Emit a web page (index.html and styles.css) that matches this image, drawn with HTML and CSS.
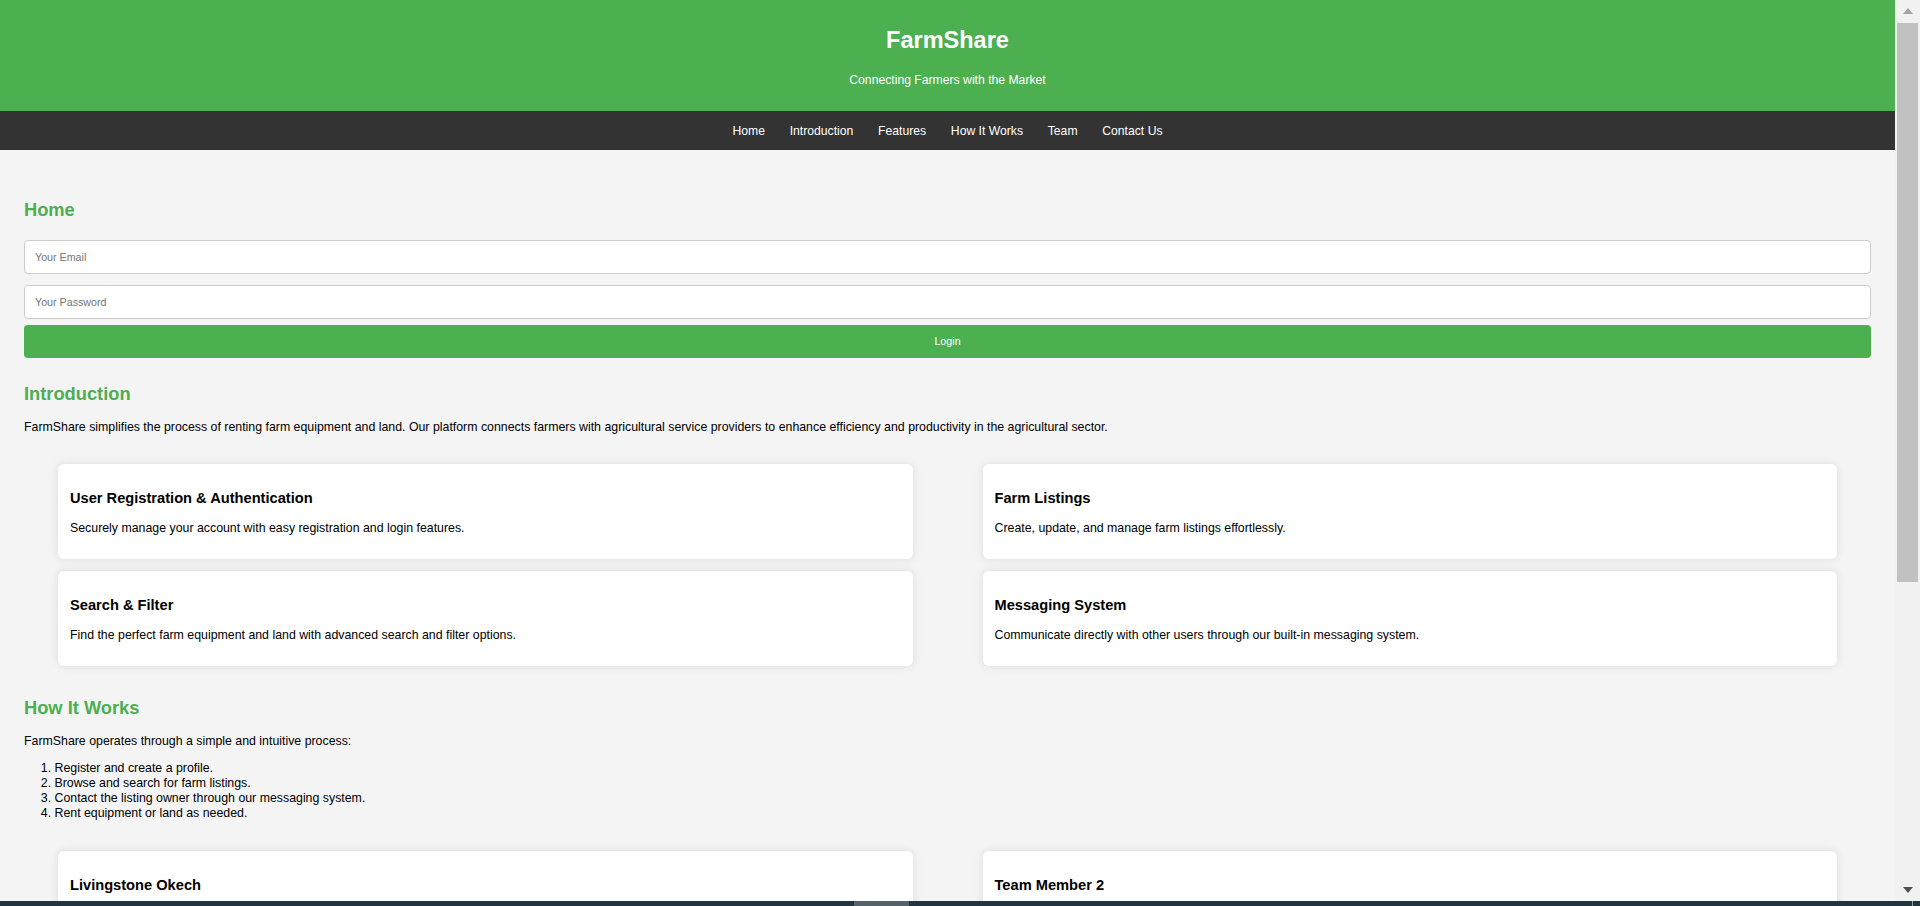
FILE: index.html
```html
<!DOCTYPE html>
<html lang="en">
<head>
<meta charset="utf-8">
<title>FarmShare</title>
<link rel="stylesheet" href="styles.css">
</head>
<body>
<div class="window">
  <div class="page">
    <header class="site-header">
      <h1>FarmShare</h1>
      <p>Connecting Farmers with the Market</p>
    </header>
    <nav class="site-nav">
      <a href="#home">Home</a>
      <a href="#introduction">Introduction</a>
      <a href="#features">Features</a>
      <a href="#how">How It Works</a>
      <a href="#team">Team</a>
      <a href="#contact">Contact Us</a>
    </nav>
    <main class="content">
      <section id="home" class="section">
        <h2 class="section-title">Home</h2>
        <form class="login-form">
          <input class="field" type="email" placeholder="Your Email">
          <input class="field" type="password" placeholder="Your Password">
          <button class="login-btn" type="button">Login</button>
        </form>
      </section>

      <section id="introduction" class="section">
        <h2 class="section-title">Introduction</h2>
        <p class="text">FarmShare simplifies the process of renting farm equipment and land. Our platform connects farmers with agricultural service providers to enhance efficiency and productivity in the agricultural sector.</p>
        <div id="features" class="card-grid">
          <div class="card">
            <h3 class="card-title">User Registration &amp; Authentication</h3>
            <p class="card-text">Securely manage your account with easy registration and login features.</p>
          </div>
          <div class="card">
            <h3 class="card-title">Farm Listings</h3>
            <p class="card-text">Create, update, and manage farm listings effortlessly.</p>
          </div>
          <div class="card">
            <h3 class="card-title">Search &amp; Filter</h3>
            <p class="card-text">Find the perfect farm equipment and land with advanced search and filter options.</p>
          </div>
          <div class="card">
            <h3 class="card-title">Messaging System</h3>
            <p class="card-text">Communicate directly with other users through our built-in messaging system.</p>
          </div>
        </div>
      </section>

      <section id="how" class="section">
        <h2 class="section-title">How It Works</h2>
        <p class="text">FarmShare operates through a simple and intuitive process:</p>
        <ol class="steps">
          <li>Register and create a profile.</li>
          <li>Browse and search for farm listings.</li>
          <li>Contact the listing owner through our messaging system.</li>
          <li>Rent equipment or land as needed.</li>
        </ol>
      </section>

      <section id="team" class="section">
        <div class="card-grid">
          <div class="card">
            <h3 class="card-title">Livingstone Okech</h3>
            <p class="card-text">Project Lead &amp; Developer</p>
          </div>
          <div class="card">
            <h3 class="card-title">Team Member 2</h3>
            <p class="card-text">Role Description</p>
          </div>
          <div class="card">
            <h3 class="card-title">Team Member 3</h3>
            <p class="card-text">Role Description</p>
          </div>
          <div class="card">
            <h3 class="card-title">Team Member 4</h3>
            <p class="card-text">Role Description</p>
          </div>
        </div>
      </section>

      <section id="contact" class="section">
        <h2 class="section-title">Contact Us</h2>
        <form class="login-form">
          <input class="field" type="text" placeholder="Your Name">
          <input class="field" type="email" placeholder="Your Email">
          <textarea class="field area" placeholder="Your Message"></textarea>
          <button class="login-btn" type="button">Send Message</button>
        </form>
      </section>
    </main>
    <footer class="site-footer">
      <p>&copy; 2024 FarmShare. All rights reserved.</p>
    </footer>
  </div>
  <div class="scrollbar">
    <div class="sb-btn">
      <svg width="10" height="6" viewBox="0 0 10 6"><polygon points="5,0 10,6 0,6" fill="#a3a3a3"/></svg>
    </div>
    <div class="sb-thumb"></div>
    <div class="sb-space"></div>
    <div class="sb-btn">
      <svg width="10" height="6" viewBox="0 0 10 6"><polygon points="0,0 10,0 5,6" fill="#505050"/></svg>
    </div>
  </div>
</div>
<div class="taskbar">
  <span class="taskbar-item"></span>
  <span class="taskbar-tick"></span>
</div>
</body>
</html>
```

FILE: styles.css
```css
* {
  box-sizing: border-box;
}

html, body {
  margin: 0;
  padding: 0;
  height: 100%;
  overflow: hidden;
}

body {
  font-family: "Liberation Sans", Arial, sans-serif;
  font-size: 12.35px;
  line-height: 15px;
  color: #000;
  background: #f4f4f4;
  display: flex;
  flex-direction: column;
}

.window {
  flex: 1;
  min-height: 0;
  display: flex;
}

.page {
  flex: 1;
  min-width: 0;
  overflow: hidden;
  background: #f4f4f4;
}

/* Header */
.site-header {
  background: #4caf50;
  color: #fff;
  text-align: center;
  padding: 26.5px 0 23.5px;
}

.site-header h1 {
  margin: 0;
  font-size: 23.5px;
  line-height: 27px;
  font-weight: bold;
}

.site-header p {
  margin: 19px 0 0;
  font-size: 12.2px;
  line-height: 15px;
}

/* Nav */
.site-nav {
  background: #333;
  display: flex;
  justify-content: center;
  padding: 12.5px 0 11.5px;
  line-height: 15px;
}

.site-nav a {
  color: #fff;
  text-decoration: none;
  padding: 0 12.35px;
  font-size: 12.2px;
}

/* Content */
.content {
  padding: 28px 24px 0;
}

.section-title {
  color: #4caf50;
  font-size: 18.3px;
  line-height: 21px;
  font-weight: bold;
  margin: 20.5px 0 16px;
}

.text {
  margin: 0 0 12px;
}

.login-form {
  margin: 20.5px 0 25px;
  display: flex;
  flex-direction: column;
}

.field {
  display: block;
  width: 100%;
  height: 34px;
  margin: 0;
  padding: 0 10px;
  border: 1px solid #ccc;
  border-radius: 4px;
  background: #fff;
  font-family: "Liberation Sans", Arial, sans-serif;
  font-size: 10.7px;
  color: #333;
}

.field::placeholder {
  color: #757575;
}

.field + .field {
  margin-top: 11px;
}

.area {
  height: 90px;
  padding: 10px;
  resize: none;
}

.login-btn {
  display: block;
  width: 100%;
  height: 32.5px;
  margin: 6px 0 0;
  border: none;
  border-radius: 4px;
  background: #4caf50;
  color: #fff;
  font-family: "Liberation Sans", Arial, sans-serif;
  font-size: 10.7px;
  cursor: pointer;
}

.card-grid {
  display: grid;
  grid-template-columns: 1fr 1fr;
  column-gap: 70px;
  row-gap: 12px;
  padding: 0 34px;
  margin: 29.5px 0 31px;
}

.card {
  background: #fff;
  border-radius: 6px;
  box-shadow: 0 0 10px rgba(0, 0, 0, 0.1);
  padding: 12px;
}

.card-title {
  margin: 14px 0;
  font-size: 14.65px;
  line-height: 17px;
  font-weight: bold;
}

.card-text {
  margin: 12px 0;
  line-height: 14px;
}

.steps {
  margin: 12px 0 29px;
  padding-left: 30.5px;
}

.site-footer {
  background: #333;
  color: #fff;
  text-align: center;
  padding: 14px 0;
  margin-top: 30px;
}

.site-footer p {
  margin: 0;
}

/* Scrollbar */
.scrollbar {
  width: 25px;
  flex: none;
  background: #f1f1f1;
  display: flex;
  flex-direction: column;
  padding: 0 2px 0 2px;
}

.sb-btn {
  height: 22px;
  display: flex;
  align-items: center;
  justify-content: center;
  flex: none;
}

.sb-thumb {
  height: 559px;
  margin-top: 1px;
  background: #c1c1c1;
  flex: none;
}

.sb-space {
  flex: 1;
}

/* Bottom strip */
.taskbar {
  height: 5px;
  flex: none;
  background: #22343e;
  display: flex;
  padding-left: 854px;
}

.taskbar-item {
  width: 55px;
  background: #56616a;
}

.taskbar-tick {
  width: 1px;
  margin-left: auto;
  margin-right: 7px;
  background: #9aa3a9;
}
```
